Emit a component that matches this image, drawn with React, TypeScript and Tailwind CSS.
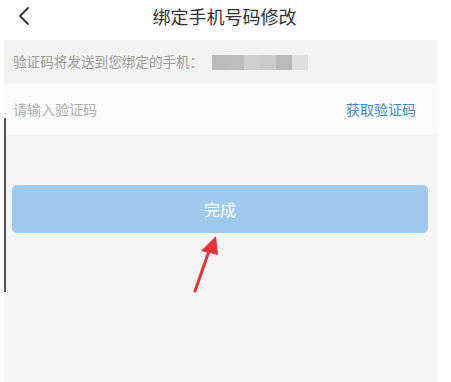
import React from "react";

export default function App() {
  const blocks = ["#bbbbbb", "#bdbdbd", "#cfcfcf", "#cbcbcb", "#bababa", "#e0e0e0"];
  return (
    <div
      className="relative w-[451px] h-[382px] bg-white overflow-hidden flex flex-col"
      style={{ fontFamily: '"Noto Sans CJK SC", "Noto Sans", sans-serif' }}
    >
      <div className="relative h-[40px] pb-[8px] flex items-center justify-center">
        <svg className="absolute left-[16px] top-[6px]" width="16" height="20" viewBox="0 0 16 20">
          <path d="M12 2 L4 10 L12 18" fill="none" stroke="#333" strokeWidth="1.8" strokeLinecap="round" strokeLinejoin="round" />
        </svg>
        <span className="text-[18px] text-[#333] leading-none ml-[-2px]">绑定手机号码修改</span>
      </div>
      <div className="ml-[4px] w-[433px] flex-1 bg-[#f5f5f5] flex flex-col">
        <div className="h-[43px] bg-[#f3f3f3] pl-[9px] flex items-center">
          <span className="text-[13.6px] text-[#9a9a9a] leading-none">验证码将发送到您绑定的手机：</span>
          <div className="flex ml-[9px] h-[15px] mt-[1px]">
            {blocks.map((c, i) => (
              <div key={i} className="w-[16px] h-full" style={{ background: c }} />
            ))}
          </div>
        </div>
        <div className="h-[52px] bg-[#fbfbfb] flex items-center justify-between pl-[9px] pr-[21px]">
          <span className="text-[14px] text-[#b0b0b0] leading-none">请输入验证码</span>
          <span className="text-[14px] text-[#3d8cc7] leading-none">获取验证码</span>
        </div>
        <div className="mt-[50px] ml-[8px] w-[416px] h-[48px] rounded-[5px] bg-[#9ecaee] flex items-center justify-center">
          <span className="text-[16px] text-white leading-none">完成</span>
        </div>
      </div>
      <div className="absolute left-[4px] top-[118px] w-[2px] h-[174px] bg-[#555]" />
      <svg className="absolute left-0 top-0 pointer-events-none" width="451" height="382" viewBox="0 0 451 382">
        <line x1="195" y1="291" x2="209" y2="251" stroke="#e5323b" strokeWidth="3" strokeLinecap="round" />
        <polygon points="216,236 201,251 218,255" fill="#e5323b" />
      </svg>
    </div>
  );
}
